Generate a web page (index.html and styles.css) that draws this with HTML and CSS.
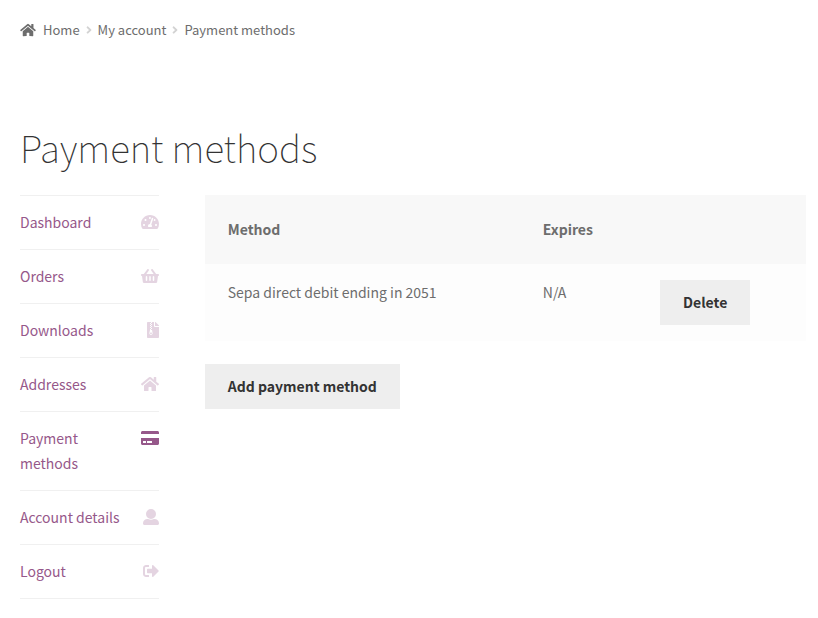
FILE: index.html
```html
<!DOCTYPE html>
<html lang="en">
<head>
<meta charset="utf-8">
<meta name="viewport" content="width=device-width, initial-scale=1">
<title>Payment methods</title>
<link rel="stylesheet" href="styles.css">
</head>
<body>
<svg class="sprite" aria-hidden="true">
  <symbol id="home" viewBox="0 0 576 512"><path d="M280.37 148.26L96 300.11V464a16 16 0 0 0 16 16l112.06-.29a16 16 0 0 0 15.92-16V368a16 16 0 0 1 16-16h64a16 16 0 0 1 16 16v95.64a16 16 0 0 0 16 16.05L464 480a16 16 0 0 0 16-16V300L295.67 148.26a12.19 12.19 0 0 0-15.3 0zM571.6 251.47L488 182.56V44.05a12 12 0 0 0-12-12h-56a12 12 0 0 0-12 12v72.61L318.47 43a48 48 0 0 0-61 0L4.34 251.47a12 12 0 0 0-1.6 16.9l25.5 31A12 12 0 0 0 45.15 301l235.22-193.74a12.19 12.19 0 0 1 15.3 0L530.9 301a12 12 0 0 0 16.9-1.6l25.5-31a12 12 0 0 0-1.7-16.93z"/></symbol>
  <symbol id="angle" viewBox="0 0 256 512"><path d="M224.3 273l-136 136c-9.4 9.4-24.6 9.4-33.9 0l-22.6-22.6c-9.4-9.4-9.4-24.6 0-33.9l96.4-96.4-96.4-96.4c-9.4-9.4-9.4-24.6 0-33.9L54.3 103c9.4-9.4 24.6-9.4 33.9 0l136 136c9.5 9.4 9.5 24.6.1 34z"/></symbol>
  <symbol id="gauge" viewBox="0 0 576 512"><path d="M288 32C128.94 32 0 160.94 0 320c0 52.8 14.25 102.26 39.06 144.8 5.61 9.62 16.3 15.2 27.44 15.2h443c11.14 0 21.83-5.58 27.44-15.2C561.75 422.26 576 372.8 576 320c0-159.06-128.94-288-288-288zm0 64c14.71 0 26.58 10.13 30.32 23.65-1.11 2.26-2.64 4.23-3.45 6.67l-9.22 27.67c-5.13 3.49-10.97 6.01-17.64 6.01-17.67 0-32-14.33-32-32S270.33 96 288 96zM96 384c-17.67 0-32-14.33-32-32s14.33-32 32-32 32 14.33 32 32-14.33 32-32 32zm48-160c-17.67 0-32-14.33-32-32s14.33-32 32-32 32 14.33 32 32-14.33 32-32 32zm246.77-72.41l-61.33 184C343.13 347.33 352 364.54 352 384c0 11.72-3.38 22.55-8.88 32H232.88c-5.5-9.45-8.88-20.28-8.88-32 0-33.94 26.5-61.43 59.9-63.59l61.34-184.01c4.17-12.56 17.73-19.45 30.36-15.17 12.57 4.19 19.35 17.79 15.17 30.36zm14.66 57.2l15.52-46.55c3.47-1.29 7.13-2.23 11.05-2.23 17.67 0 32 14.33 32 32s-14.33 32-32 32c-11.38-.01-20.89-6.28-26.57-15.22zM480 384c-17.67 0-32-14.33-32-32s14.33-32 32-32 32 14.33 32 32-14.33 32-32 32z"/></symbol>
  <symbol id="basket" viewBox="0 0 576 512"><path d="M576 216v16c0 13.255-10.745 24-24 24h-8l-26.113 182.788C514.509 462.435 494.257 480 470.37 480H105.63c-23.887 0-44.139-17.565-47.518-41.212L32 256h-8c-13.255 0-24-10.745-24-24v-16c0-13.255 10.745-24 24-24h67.341l106.78-146.821c10.395-14.292 30.407-17.453 44.701-7.058 14.293 10.395 17.453 30.408 7.058 44.701L170.477 192h235.046L326.12 82.821c-10.395-14.292-7.234-34.306 7.059-44.701 14.291-10.395 34.306-7.235 44.701 7.058L484.659 192H552c13.255 0 24 10.745 24 24zM312 392V280c0-13.255-10.745-24-24-24s-24 10.745-24 24v112c0 13.255 10.745 24 24 24s24-10.745 24-24zm112 0V280c0-13.255-10.745-24-24-24s-24 10.745-24 24v112c0 13.255 10.745 24 24 24s24-10.745 24-24zm-224 0V280c0-13.255-10.745-24-24-24s-24 10.745-24 24v112c0 13.255 10.745 24 24 24s24-10.745 24-24z"/></symbol>
  <symbol id="archive" viewBox="0 0 384 512"><path d="M377 105L279.1 7c-4.5-4.5-10.6-7-17-7H256v128h128v-6.100c0-6.300-2.500-12.400-7-16.900zM128.400 336c-17.900 0-32.400 12.100-32.400 27 0 15 14.600 27 32.500 27s32.400-12.100 32.400-27-14.600-27-32.500-27zM224 136V0h-63.600v32h-32V0H24C10.700 0 0 10.700 0 24v464c0 13.300 10.700 24 24 24h336c13.300 0 24-10.700 24-24V160H248c-13.200 0-24-10.800-24-24zM95.900 32h32v32h-32V32zm32.300 384c-33.200 0-58-30.400-51.400-62.900L96.400 256v-32h32v-32h-32v-32h32v-32h-32V96h32V64h32v32h-32v32h32v32h-32v32h32v32h-32v32h22.100c5.700 0 10.700 4.100 11.800 9.700l17.300 87.700c6.400 32.400-18.400 62.600-51.400 62.600z"/></symbol>
  <symbol id="card" viewBox="0 0 576 512"><path d="M0 432c0 26.500 21.500 48 48 48h480c26.500 0 48-21.500 48-48V256H0v176zm192-68c0-6.600 5.400-12 12-12h136c6.600 0 12 5.400 12 12v40c0 6.600-5.400 12-12 12H204c-6.600 0-12-5.400-12-12v-40zm-128 0c0-6.600 5.400-12 12-12h72c6.600 0 12 5.400 12 12v40c0 6.600-5.400 12-12 12H76c-6.600 0-12-5.400-12-12v-40zM576 80v48H0V80c0-26.500 21.500-48 48-48h480c26.500 0 48 21.500 48 48z"/></symbol>
  <symbol id="user" viewBox="0 0 512 512"><path d="M256 0a160 160 0 1 1 0 320 160 160 0 0 1 0-320zM144 320h20a196 196 0 0 0 184 0h20c80 0 144 52 144 132v12c0 26-22 48-48 48H48c-26 0-48-22-48-48v-12c0-80 64-132 144-132z"/></symbol>
  <symbol id="logout" viewBox="0 0 512 512"><path d="M497 273L329 441c-15 15-41 4.500-41-17v-96H152c-13.300 0-24-10.700-24-24v-96c0-13.300 10.700-24 24-24h136V88c0-21.400 25.900-32 41-17l168 168c9.300 9.400 9.300 24.600 0 34zM192 436v-40c0-6.600-5.400-12-12-12H96c-17.700 0-32-14.300-32-32V160c0-17.700 14.300-32 32-32h84c6.600 0 12-5.400 12-12V76c0-6.600-5.400-12-12-12H96c-53 0-96 43-96 96v192c0 53 43 96 96 96h84c6.600 0 12-5.400 12-12z"/></symbol>
</svg>

<nav class="breadcrumb" aria-label="Breadcrumb">
  <a href="#"><svg class="icon-home" aria-hidden="true"><use href="#home"/></svg>Home</a>
  <svg class="separator" aria-hidden="true"><use href="#angle"/></svg>
  <a href="#">My account</a>
  <svg class="separator" aria-hidden="true"><use href="#angle"/></svg>
  <span aria-current="page">Payment methods</span>
</nav>

<main>
  <h1>Payment methods</h1>
  <div class="account">
    <nav class="account-nav" aria-label="Account">
      <ul>
        <li><a href="#">Dashboard<svg class="icon" aria-hidden="true"><use href="#gauge"/></svg></a></li>
        <li><a href="#">Orders<svg class="icon" aria-hidden="true"><use href="#basket"/></svg></a></li>
        <li><a href="#">Downloads<svg class="icon icon-narrow" aria-hidden="true"><use href="#archive"/></svg></a></li>
        <li><a href="#">Addresses<svg class="icon" aria-hidden="true"><use href="#home"/></svg></a></li>
        <li class="active"><a href="#">Payment methods<svg class="icon" aria-hidden="true"><use href="#card"/></svg></a></li>
        <li><a href="#">Account details<svg class="icon icon-square" aria-hidden="true"><use href="#user"/></svg></a></li>
        <li><a href="#">Logout<svg class="icon icon-square" aria-hidden="true"><use href="#logout"/></svg></a></li>
      </ul>
    </nav>
    <section class="content">
      <table>
        <colgroup><col class="col-method"><col class="col-expires"><col></colgroup>
        <thead>
          <tr><th scope="col">Method</th><th scope="col">Expires</th><td></td></tr>
        </thead>
        <tbody>
          <tr><td>Sepa direct debit ending in 2051</td><td>N/A</td><td><button class="button" type="button">Delete</button></td></tr>
        </tbody>
      </table>
      <a class="button" href="#">Add payment method</a>
    </section>
  </div>
</main>
</body>
</html>
```
FILE: styles.css
```css
* {
  box-sizing: border-box;
}

body {
  margin: 0;
  padding: 20px 12px 20px 20px;
  background: #fff;
  color: #6d6d6d;
  font-family: "Noto Sans CJK SC", "Noto Sans", sans-serif;
  font-size: 14px;
  line-height: 25px;
}

a {
  color: inherit;
  text-decoration: none;
}

svg {
  fill: currentColor;
}

.sprite {
  display: none;
}

.breadcrumb {
  display: flex;
  align-items: center;
  gap: 6px;
  font-size: 13px;
  line-height: 20px;
}

.breadcrumb a {
  display: flex;
  align-items: center;
  gap: 7px;
}

.icon-home {
  width: 16px;
  height: 14px;
}

.separator {
  width: 6px;
  height: 12px;
  color: #d3d3d3;
}

h1 {
  margin: 82px 0 22px;
  color: #333;
  font-size: 37px;
  font-weight: 100;
  line-height: 51px;
}

.account {
  display: grid;
  grid-template-columns: 3fr 13fr;
  gap: 46px;
  align-items: start;
}

.account-nav ul {
  margin: 0;
  padding: 0;
  border-top: 1px solid #f0f0f0;
  list-style: none;
}

.account-nav li {
  border-bottom: 1px solid #f0f0f0;
}

.account-nav a {
  display: flex;
  justify-content: space-between;
  gap: 12px;
  padding: 14px 0;
  color: #96588a;
}

.icon {
  flex: none;
  width: 18px;
  height: 16px;
  margin-top: 4px;
  opacity: 0.25;
}

.icon-narrow {
  width: 12px;
}

.icon-square {
  width: 16px;
}

.active .icon {
  opacity: 1;
}

table {
  width: 100%;
  margin-bottom: 23px;
  border-collapse: collapse;
  table-layout: fixed;
}

.col-method {
  width: 52.4%;
}

.col-expires {
  width: 19.5%;
}

th,
td {
  padding: 16px 23px;
  text-align: left;
  vertical-align: top;
}

thead th,
thead td {
  padding: 22px 23px;
  background: #f8f8f8;
}

tbody td {
  background: #fdfdfd;
}

th {
  font-weight: 600;
}

.button {
  display: inline-block;
  padding: 10px 23px;
  border: 0;
  background: #eee;
  color: #333;
  font: inherit;
  font-weight: 600;
  vertical-align: top;
  cursor: pointer;
}
```
